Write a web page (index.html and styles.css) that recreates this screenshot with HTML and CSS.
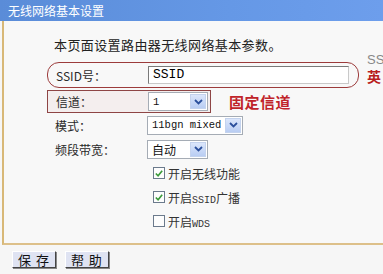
FILE: index.html
```html
<!DOCTYPE html>
<html lang="zh-CN">
<head>
  <meta charset="UTF-8" />
  <title>无线网络基本设置</title>
  <link rel="stylesheet" href="styles.css">
</head>
<body>
  <div class="titlebar">无线网络基本设置</div>

  <div class="panel">
    <p class="intro">本页面设置路由器无线网络基本参数。</p>

    <div class="form">
      <div class="line">
        <div class="row ssid">
          <span class="label">SSID号：</span>
          <div class="input">SSID</div>
        </div>
        <div class="aside">
          <span class="aside-top">SS</span>
          <span class="aside-red">英</span>
        </div>
      </div>

      <div class="line">
        <div class="row channel">
          <span class="label">信道：</span>
          <div class="select w-channel">
            <span class="val mono">1</span>
            <span class="drop"><svg width="9" height="6" viewBox="0 0 9 6"><path d="M1 1 L4.5 4.5 L8 1" fill="none" stroke="#2b4f9c" stroke-width="1.8"/></svg></span>
          </div>
        </div>
        <span class="note">固定信道</span>
      </div>

      <div class="row plain">
        <span class="label">模式：</span>
        <div class="select w-mode">
          <span class="val mono">11bgn mixed</span>
          <span class="drop"><svg width="9" height="6" viewBox="0 0 9 6"><path d="M1 1 L4.5 4.5 L8 1" fill="none" stroke="#2b4f9c" stroke-width="1.8"/></svg></span>
        </div>
      </div>

      <div class="row plain">
        <span class="label">频段带宽：</span>
        <div class="select w-band">
          <span class="val">自动</span>
          <span class="drop"><svg width="9" height="6" viewBox="0 0 9 6"><path d="M1 1 L4.5 4.5 L8 1" fill="none" stroke="#2b4f9c" stroke-width="1.8"/></svg></span>
        </div>
      </div>

      <div class="check">
        <span class="box"><svg width="11" height="11" viewBox="0 0 11 11"><path d="M2 5.5 L4.5 8 L9 2.5" fill="none" stroke="#3a9a3a" stroke-width="1.8"/></svg></span>
        <span>开启无线功能</span>
      </div>
      <div class="check">
        <span class="box"><svg width="11" height="11" viewBox="0 0 11 11"><path d="M2 5.5 L4.5 8 L9 2.5" fill="none" stroke="#3a9a3a" stroke-width="1.8"/></svg></span>
        <span>开启<span class="mono-s">SSID</span>广播</span>
      </div>
      <div class="check">
        <span class="box"></span>
        <span>开启<span class="mono-s">WDS</span></span>
      </div>
    </div>
  </div>

  <div class="buttons">
    <button class="btn">保 存</button>
    <button class="btn">帮 助</button>
  </div>
</body>
</html>
```

FILE: styles.css
```css
body, html {
  margin: 0;
  padding: 0;
  background: #f6f6f6;
  color: #2a2a2a;
  font-family: "Noto Sans CJK SC", "Noto Sans", sans-serif;
  font-size: 12px;
  height: 100%;
  overflow: hidden;
}
.titlebar {
  height: 21px;
  line-height: 21px;
  padding-left: 8px;
  color: #fff;
  font-size: 12px;
  background: linear-gradient(to right, #5a8cd8, #6598e6 60%, #6d9eec);
}
.panel {
  height: 222px;
  margin-left: 2px;
  border-left: 2px solid #d8b877;
  border-bottom: 2px solid #ddc08a;
  background: #f8f8f8;
}
.intro {
  margin: 0;
  padding: 15px 0 0 50px;
  height: 26px;
  line-height: 18px;
  font-size: 13px;
  letter-spacing: 0.4px;
  color: #222;
}
.form {
  padding-left: 43px;
}
.line {
  display: flex;
  align-items: center;
}
.row {
  display: flex;
  align-items: center;
  box-sizing: border-box;
  padding-left: 8px;
  flex: none;
}
.label {
  width: 92px;
  flex: none;
}
.ssid {
  width: 312px;
  height: 26px;
  border: 1px solid #9c3b3b;
  border-radius: 12px;
}
.channel {
  width: 164px;
  height: 23px;
  margin-top: 2px;
  border: 1px solid #8e4545;
  background: #f4eeee;
}
.plain {
  height: 24px;
}
.input {
  width: 201px;
  height: 18px;
  box-sizing: border-box;
  border: 1px solid #7a7a7a;
  border-right-color: #c9c9c9;
  border-bottom-color: #c9c9c9;
  background: #fff;
  padding-left: 4px;
  line-height: 16px;
  font-family: "Liberation Mono", monospace;
  font-size: 13px;
  color: #000;
}
.aside {
  display: flex;
  flex-direction: column;
  flex: none;
  margin: -14px 0 0 8px;
  white-space: nowrap;
}
.aside-top {
  color: #888;
  font-family: "Liberation Sans", sans-serif;
  font-size: 13px;
  line-height: 16px;
}
.aside-red {
  color: #b81e1e;
  font-weight: bold;
  font-size: 14px;
  line-height: 16px;
}
.note {
  margin: 2px 0 0 18px;
  color: #c0242a;
  font-weight: bold;
  font-size: 15px;
  letter-spacing: 0.5px;
}
.select {
  display: flex;
  align-items: center;
  justify-content: space-between;
  height: 19px;
  box-sizing: border-box;
  border: 1px solid #a5acb5;
  background: #fff;
  padding: 0 1px 0 4px;
  white-space: nowrap;
}
.w-channel { width: 60px; }
.w-mode { width: 96px; }
.w-band { width: 61px; }
.val {
  font-size: 12px;
  color: #111;
}
.mono {
  font-family: "Liberation Mono", monospace;
  font-size: 10.5px;
}
.mono-s {
  font-family: "Liberation Mono", monospace;
  font-size: 10px;
}
.drop {
  width: 16px;
  height: 15px;
  flex: none;
  display: flex;
  align-items: center;
  justify-content: center;
  background: linear-gradient(#dbe6fb, #b9cdf3);
  border: 1px solid #c4d3ee;
  box-sizing: border-box;
}
.check {
  display: flex;
  align-items: center;
  height: 24px;
  padding-left: 106px;
  gap: 3px;
  font-size: 12px;
  color: #333;
}
.box {
  width: 12px;
  height: 12px;
  box-sizing: border-box;
  border: 1px solid #6b7a8c;
  background: #fdfdfd;
  display: flex;
  align-items: center;
  justify-content: center;
}
.buttons {
  display: flex;
  gap: 9px;
  padding: 6px 0 0 12px;
}
.btn {
  height: 17px;
  padding: 0 5px;
  font-family: "Noto Sans CJK SC", sans-serif;
  font-size: 13px;
  line-height: 13px;
  color: #111;
  background: #dfe3f2;
  border: 1px solid #444;
  border-top-color: #fff;
  border-left-color: #fff;
  box-shadow: 1px 1px 0 #888;
  letter-spacing: 1px;
}
```
